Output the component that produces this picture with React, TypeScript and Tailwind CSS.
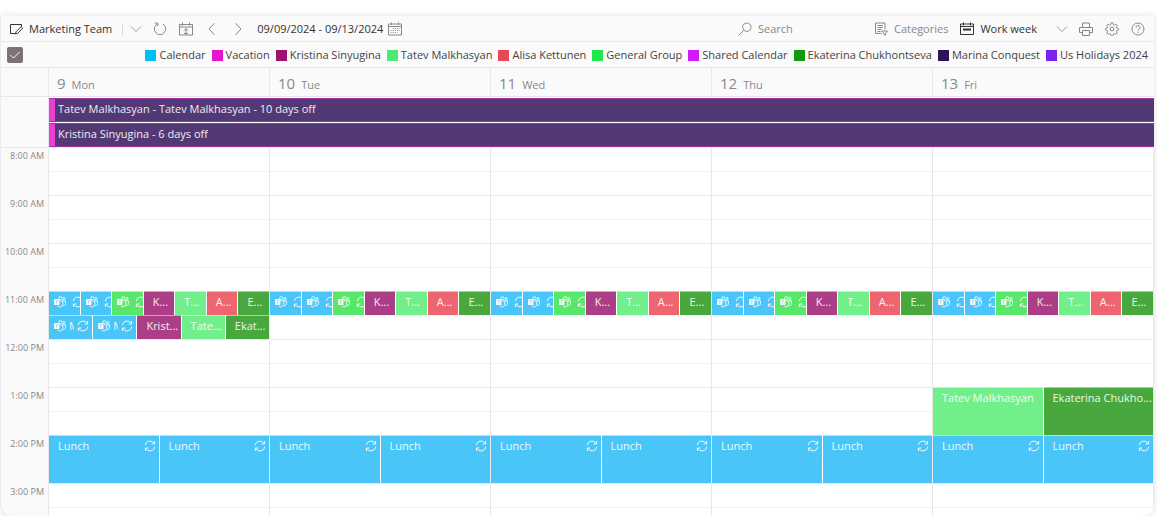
import type { ReactNode } from 'react';

type CalEvent = {
  title: string;
  color: string;
  meeting?: boolean;
  recurring?: boolean;
};

type EventGroup = {
  row: string;
  events: CalEvent[];
};

const BLUE = 'bg-[#4ac5f7]';
const GREEN = 'bg-[#57e86b]';
const PLUM = 'bg-[#ac3d87]';
const MINT = 'bg-[#71ef8a]';
const RED = 'bg-[#ec6571]';
const FOREST = 'bg-[#48a83e]';

const legend = [
  { name: 'Calendar', color: 'bg-[#03bdf5]' },
  { name: 'Vacation', color: 'bg-[#e813cf]' },
  { name: 'Kristina Sinyugina', color: 'bg-[#9e1272]' },
  { name: 'Tatev Malkhasyan', color: 'bg-[#4aea74]' },
  { name: 'Alisa Kettunen', color: 'bg-[#e84856]' },
  { name: 'General Group', color: 'bg-[#1de84c]' },
  { name: 'Shared Calendar', color: 'bg-[#d01af8]' },
  { name: 'Ekaterina Chukhontseva', color: 'bg-[#0f9a0f]' },
  { name: 'Marina Conquest', color: 'bg-[#30125a]' },
  { name: 'Us Holidays 2024', color: 'bg-[#7b22f0]' },
];

const hours = [
  '8:00 AM',
  '9:00 AM',
  '10:00 AM',
  '11:00 AM',
  '12:00 PM',
  '1:00 PM',
  '2:00 PM',
  '3:00 PM',
];

const allDay = [
  'Tatev Malkhasyan - Tatev Malkhasyan - 10 days off',
  'Kristina Sinyugina - 6 days off',
];

const standup: EventGroup = {
  row: 'row-[7/span_1]',
  events: [
    { title: '', color: BLUE, meeting: true, recurring: true },
    { title: '', color: BLUE, meeting: true, recurring: true },
    { title: '', color: GREEN, meeting: true, recurring: true },
    { title: 'K...', color: PLUM },
    { title: 'T...', color: MINT },
    { title: 'A...', color: RED },
    { title: 'E...', color: FOREST },
  ],
};

const review: EventGroup = {
  row: 'row-[8/span_1]',
  events: [
    { title: 'M', color: BLUE, meeting: true, recurring: true },
    { title: 'M', color: BLUE, meeting: true, recurring: true },
    { title: 'Krist...', color: PLUM },
    { title: 'Tate...', color: MINT },
    { title: 'Ekat...', color: FOREST },
  ],
};

const lunch: EventGroup = {
  row: 'row-[13/span_2]',
  events: [
    { title: 'Lunch', color: BLUE, recurring: true },
    { title: 'Lunch', color: BLUE, recurring: true },
  ],
};

const afternoon: EventGroup = {
  row: 'row-[11/span_2]',
  events: [
    { title: 'Tatev Malkhasyan', color: MINT },
    { title: 'Ekaterina Chukho...', color: FOREST },
  ],
};

const days = [
  { date: '9', name: 'Mon', groups: [standup, review, lunch] },
  { date: '10', name: 'Tue', groups: [standup, lunch] },
  { date: '11', name: 'Wed', groups: [standup, lunch] },
  { date: '12', name: 'Thu', groups: [standup, lunch] },
  { date: '13', name: 'Fri', groups: [standup, afternoon, lunch] },
];

const slotRows = [
  'row-[1]', 'row-[2]', 'row-[3]', 'row-[4]',
  'row-[5]', 'row-[6]', 'row-[7]', 'row-[8]',
  'row-[9]', 'row-[10]', 'row-[11]', 'row-[12]',
  'row-[13]', 'row-[14]', 'row-[15]', 'row-[16]',
];

function Icon({ children, className = 'size-[14px]' }: { children: ReactNode; className?: string }) {
  return (
    <svg
      viewBox="0 0 14 14"
      fill="none"
      stroke="currentColor"
      strokeWidth="1"
      className={`shrink-0 ${className}`}
      aria-hidden="true"
    >
      {children}
    </svg>
  );
}

function RecurringIcon() {
  return (
    <svg viewBox="0 0 12 12" fill="none" stroke="currentColor" className="mt-px size-3 shrink-0" aria-hidden="true">
      <path d="M1.2 5.2A4.8 4.8 0 0 1 10.2 3.6M10.8 6.8A4.8 4.8 0 0 1 1.8 8.4" />
      <path d="M10.6 1v3H7.6M1.4 11V8h3" />
    </svg>
  );
}

function TeamsIcon() {
  return (
    <svg viewBox="0 0 12 12" fill="none" stroke="currentColor" strokeWidth=".9" className="mt-px size-3 shrink-0" aria-hidden="true">
      <rect x="0" y="3" width="5.5" height="6" rx=".5" fill="currentColor" stroke="none" />
      <path d="M1.3 4.7h3M2.8 4.7v3" className="stroke-black/20" strokeWidth=".7" />
      <circle cx="6.3" cy="2.2" r="1.6" />
      <circle cx="10" cy="2.6" r="1.1" />
      <path d="M6.2 4.8h2.6v3.4a2.8 2.8 0 0 1-5 1.6M8.8 4.8h2.7v2.9a1.8 1.8 0 0 1-2.7 1.6" />
    </svg>
  );
}

function ChevronDown() {
  return (
    <Icon className="size-[14px] text-[#999]">
      <path d="M2 4.5l5 5 5-5" />
    </Icon>
  );
}

function EventCard({ event }: { event: CalEvent }) {
  return (
    <button
      type="button"
      className={`flex min-w-0 items-start overflow-hidden border-t border-white/50 pt-[3px] text-left text-white/90 ${
        event.meeting ? 'gap-[3px] pl-[5px]' : 'pl-[9px]'
      } ${event.recurring ? 'pr-[3px]' : ''} ${event.color}`}
    >
      {event.meeting && <TeamsIcon />}
      {event.title && (
        <span className={`min-w-0 flex-1 leading-[14px] whitespace-nowrap ${event.meeting ? 'overflow-hidden' : ''}`}>
          {event.title}
        </span>
      )}
      {event.recurring && (
        <span className={event.meeting && !event.title ? 'pl-[3px]' : ''}>
          <RecurringIcon />
        </span>
      )}
    </button>
  );
}

function Toolbar() {
  return (
    <header className="flex h-[26px] shrink-0 items-center border-b border-[#e8e8e8] pt-px pr-[9px] pl-2 text-[#333]">
      <button type="button" className="flex items-center gap-[6px]">
        <Icon>
          <path d="M6 11.5H1.5v-9h11v2" />
          <path d="M6.5 12l.6-2.3 5-5 1.6 1.5-5 5.2z" />
        </Icon>
        Marketing Team
      </button>
      <span className="ml-[10px] h-3 w-px bg-[#d8d8d8]" />
      <button type="button" aria-label="Calendars" className="ml-[6px]">
        <ChevronDown />
      </button>
      <div className="ml-[10px] flex items-center gap-3 text-[#888]">
        <button type="button" aria-label="Refresh">
          <Icon>
            <path d="M9.7 1.9A5.7 5.7 0 1 1 4.4 1.9M1.8 1.2h3v3" />
          </Icon>
        </button>
        <button type="button" aria-label="Today">
          <Icon>
            <path d="M.5 2.5h13V13H.5zM.5 5h13M3.5.5v3M10.5.5v3M7 11.5v-5M5 8.5l2-2 2 2M5 11.5h4" />
          </Icon>
        </button>
        <button type="button" aria-label="Previous week">
          <Icon>
            <path d="M9.5 1.2L4 7l5.5 5.8" />
          </Icon>
        </button>
        <button type="button" aria-label="Next week">
          <Icon>
            <path d="M4.5 1.2L10 7l-5.5 5.8" />
          </Icon>
        </button>
      </div>
      <button type="button" className="ml-3 flex items-center gap-[5px]">
        09/09/2024 - 09/13/2024
        <Icon className="size-[14px] text-[#888]">
          <path d="M.5 2h13v11H.5zM.5 4.5h13M3.5.5V3M10.5.5V3" />
          <path d="M5 6.5h7M2.5 8.5H12M2.5 10.5h7" strokeDasharray="1 1.2" />
        </Icon>
      </button>
      <label className="ml-auto flex items-center gap-[6px] text-[#888]">
        <Icon>
          <circle cx="8.8" cy="5.2" r="4.2" />
          <path d="M5.7 8.3L.5 13.5" />
        </Icon>
        <input
          type="text"
          placeholder="Search"
          aria-label="Search"
          className="w-[116px] bg-transparent outline-none placeholder:text-[#888]"
        />
      </label>
      <button type="button" className="flex items-center gap-[6px] text-[#888]">
        <Icon>
          <path d="M7.5 11.5h-6V1H11v6.5M3.5 3.5H9M3.5 5.5H9M3.5 7.5h4M3.5 9.5h3" />
          <path d="M7.5 9h6l-2 2.2v2l-1.8-1v-1z" />
        </Icon>
        Categories
      </button>
      <button type="button" className="ml-3 flex items-center text-[#333]">
        <Icon>
          <path d="M.5 2h13v10.5H.5zM.5 4.5h13M3.5.5v3M10.5.5v3" />
          <path d="M3 7.5h8" strokeWidth="2" />
        </Icon>
        <span className="mr-[18px] ml-[6px]">Work week</span>
        <ChevronDown />
      </button>
      <div className="ml-[10px] flex items-center gap-3 text-[#888]">
        <button type="button" aria-label="Print">
          <Icon>
            <path d="M3.5 5.5V1h7v4.5M3.5 10.5h-3v-5h13v5h-3M3.5 8.5h7v5h-7z" />
          </Icon>
        </button>
        <button type="button" aria-label="Settings">
          <Icon>
            <circle cx="7" cy="7" r="2" />
            <path d="M6.1.8h1.8l.4 1.7 1.1.5 1.5-.9 1.3 1.3-.9 1.5.5 1.1 1.6.4v1.8l-1.6.4-.5 1.1.9 1.5-1.3 1.3-1.5-.9-1.1.5-.4 1.6H6.1l-.4-1.6-1.1-.5-1.5.9-1.3-1.3.9-1.5-.5-1.1-1.6-.4V6.4l1.6-.4.5-1.1-.9-1.5 1.3-1.3 1.5.9 1.1-.5z" />
          </Icon>
        </button>
        <button type="button" aria-label="Help">
          <Icon>
            <circle cx="7" cy="7" r="6" />
            <path d="M5 5.5a2 2 0 1 1 3 1.7C7.3 7.7 7 8 7 8.7M7 9.8v1.1" />
          </Icon>
        </button>
      </div>
    </header>
  );
}

function Legend() {
  return (
    <div className="flex h-[26px] shrink-0 items-center justify-between border-b border-[#e8e8e8] px-[6px] pt-px text-[#444]">
      <label className="grid size-4 shrink-0">
        <input
          type="checkbox"
          defaultChecked
          aria-label="All calendars"
          className="col-start-1 row-start-1 size-4 appearance-none rounded-xs bg-[#7a7574]"
        />
        <svg
          viewBox="0 0 16 16"
          fill="none"
          stroke="white"
          className="pointer-events-none col-start-1 row-start-1 size-4"
          aria-hidden="true"
        >
          <path d="M3.5 8l3 3 6-6" />
        </svg>
      </label>
      <ul className="flex gap-[6px]">
        {legend.map((item) => (
          <li key={item.name} className="flex items-center gap-[3px] whitespace-nowrap">
            <span className={`size-[11px] ${item.color}`} />
            {item.name}
          </li>
        ))}
      </ul>
    </div>
  );
}

export default function App() {
  return (
    <div className="h-screen overflow-hidden bg-white pt-4 pr-[3px] font-['Open_Sans','Noto_Sans',sans-serif] text-[11px]">
      <main className="flex h-full flex-col overflow-hidden rounded-b-xl border-l border-[#ececec] bg-[#fafafa] shadow-[0_0_8px_rgba(0,0,0,0.12)]">
        <Toolbar />
        <Legend />

        {/* Day headers */}
        <div className="flex h-[29px] shrink-0 border-b border-[#e8e8e8]">
          <div className="w-12 shrink-0 border-r border-[#e8e8e8]" />
          <div className="grid flex-1 grid-cols-5">
            {days.map((day) => (
              <div
                key={day.date}
                className="flex items-baseline gap-[6px] border-r border-[#e8e8e8] pt-[5px] pl-2 text-[#888] last:border-r-0"
              >
                <span className="text-[15px] leading-5">{day.date}</span>
                <span>{day.name}</span>
              </div>
            ))}
          </div>
        </div>

        {/* All-day events */}
        <div className="flex shrink-0">
          <div className="w-12 shrink-0 border-r border-[#e8e8e8]" />
          <div className="flex flex-1 flex-col gap-px bg-white pt-px">
            {allDay.map((title) => (
              <button
                key={title}
                type="button"
                className="flex h-6 border-y border-[#a032a4] bg-[#523975] text-left text-white/90"
              >
                <span className="w-[6px] self-stretch bg-[#ea3fd4]" />
                <span className="truncate pl-[3px] leading-5">{title}</span>
              </button>
            ))}
          </div>
        </div>

        {/* Time grid */}
        <div className="flex min-h-0 flex-1 overflow-hidden">
          <div className="w-12 shrink-0 border-t border-[#e8e8e8] text-right text-[9px] text-[#888]">
            {hours.map((hour) => (
              <div key={hour} className="h-12 border-r border-[#e8e8e8] pr-1 leading-4">
                {hour}
              </div>
            ))}
          </div>
          <div className="grid flex-1 grid-cols-5 bg-white">
            {days.map((day) => (
              <div
                key={day.date}
                className="grid grid-cols-[minmax(0,1fr)] grid-rows-[repeat(16,24px)] border-r border-[#e8e8e8]"
              >
                {slotRows.map((row, i) => (
                  <div
                    key={row}
                    className={`col-start-1 border-t ${row} ${i % 2 ? 'border-[#f4f4f4]' : 'border-[#e8e8e8]'}`}
                  />
                ))}
                {day.groups.map((group) => (
                  <div
                    key={group.row}
                    className={`col-start-1 grid auto-cols-[minmax(0,1fr)] grid-flow-col gap-px bg-white/60 ${group.row}`}
                  >
                    {group.events.map((event, i) => (
                      <EventCard key={i} event={event} />
                    ))}
                  </div>
                ))}
              </div>
            ))}
          </div>
        </div>
      </main>
    </div>
  );
}
